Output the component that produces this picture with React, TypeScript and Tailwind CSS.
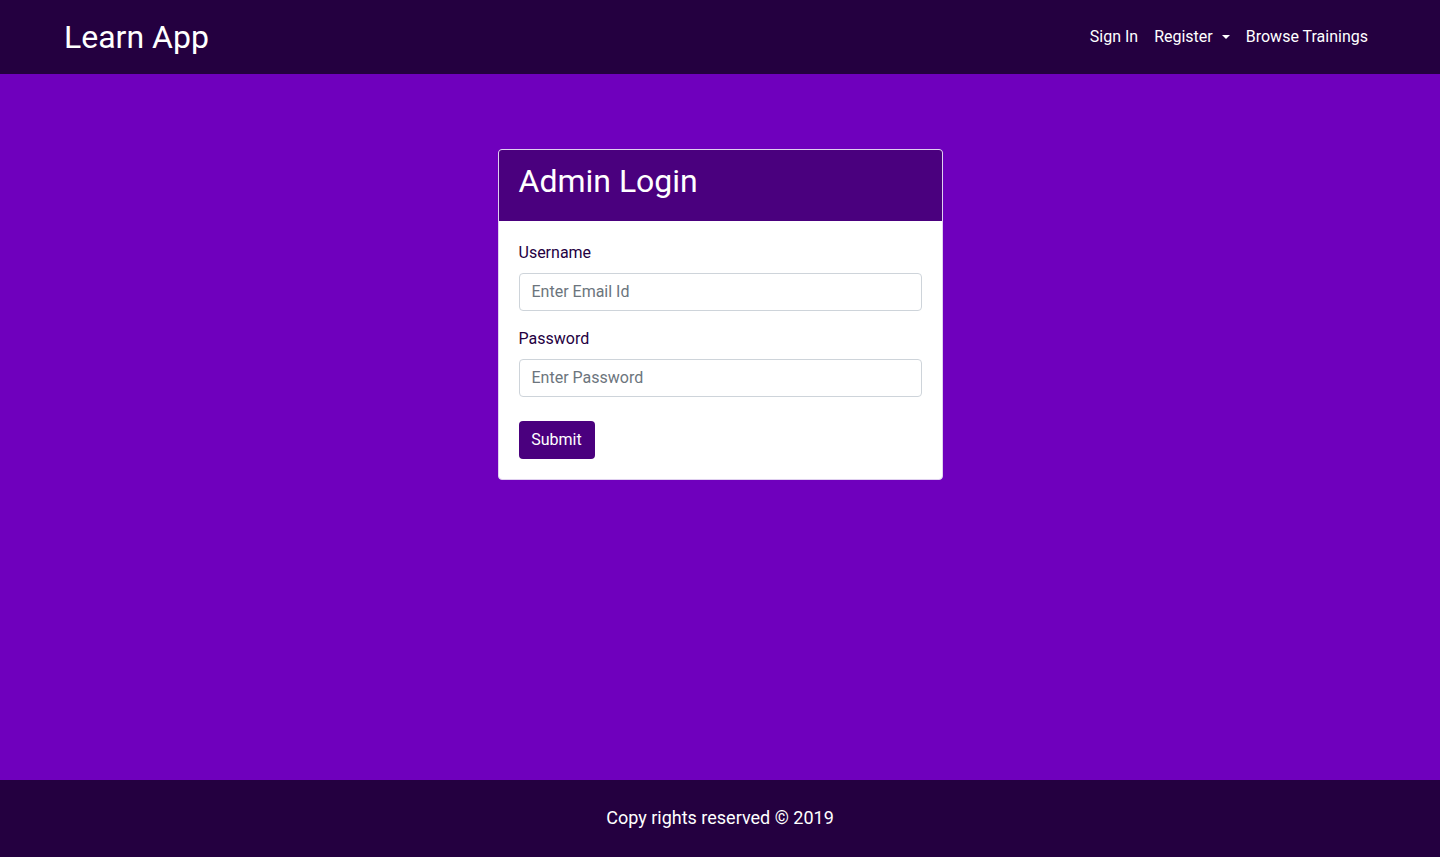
export default function App() {
  return (
    <div
      className="flex h-screen flex-col bg-[#6f00bd] text-white"
      style={{ fontFamily: 'Roboto, "Liberation Sans", sans-serif' }}
    >
      {/* Navbar */}
      <nav className="flex h-[74px] shrink-0 items-center justify-between bg-[#240040] px-16">
        <a className="text-[32px] leading-none">Learn App</a>
        <ul className="flex items-center text-base">
          <li className="px-2">Sign In</li>
          <li className="flex items-center px-2">
            Register
            <span className="ml-[9px] inline-block h-0 w-0 border-x-[4.8px] border-t-[4.8px] border-x-transparent border-t-white" />
          </li>
          <li className="px-2">Browse Trainings</li>
        </ul>
      </nav>

      {/* Main */}
      <main className="flex flex-1 justify-center pt-[75px]">
        <div className="h-fit w-[445px] overflow-hidden rounded border border-[#e0d0f0] bg-white">
          <div className="bg-[#4a007e] px-5 pb-[21px] pt-3">
            <h2 className="text-[32px] leading-[1.2] text-white">Admin Login</h2>
          </div>
          <form className="flex flex-col p-5 text-[#240041]">
            <label className="mb-2 text-base leading-6">Username</label>
            <input
              type="text"
              placeholder="Enter Email Id"
              className="h-[38px] rounded border border-[#ced4da] px-3 pb-px text-base text-[#495057] placeholder:text-[#6c757d] outline-none"
            />
            <label className="mb-2 mt-4 text-base leading-6">Password</label>
            <input
              type="password"
              placeholder="Enter Password"
              className="h-[38px] rounded border border-[#ced4da] px-3 pb-px text-base text-[#495057] placeholder:text-[#6c757d] outline-none"
            />
            <button
              type="button"
              className="mt-6 h-[38px] w-[76px] rounded bg-[#4a007e] text-base text-white"
            >
              Submit
            </button>
          </form>
        </div>
      </main>

      {/* Footer */}
      <footer className="flex h-[77px] shrink-0 items-center justify-center bg-[#240040] pb-0.5 text-[18px]">
        Copy rights reserved © 2019
      </footer>
    </div>
  );
}
